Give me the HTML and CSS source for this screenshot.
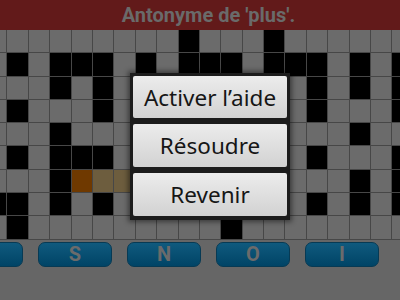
FILE: index.html
```html
<!DOCTYPE html>
<html lang="fr">
<head>
  <meta charset="UTF-8">
  <title>Mots croisés</title>
  <link rel="stylesheet" href="styles.css">
</head>
<body>

<div class="clue">Antonyme de 'plus'.</div>

<div class="board" id="board"></div>

<div class="keys">
  <div class="key"></div>
  <div class="key">S</div>
  <div class="key">N</div>
  <div class="key">O</div>
  <div class="key">I</div>
</div>

<div class="dialog">
  <button class="menu-btn">Activer l’aide</button>
  <button class="menu-btn">Résoudre</button>
  <button class="menu-btn">Revenir</button>
</div>

<script>
  // # black, o current cell, t selected word, . empty
  const rows = [
    '.........#...#......',
    '.#.###.#.###.###.#.#',
    '...#.#.........#.#.#',
    '.#...#.........#...#',
    '...#.............#..',
    '.#.###.........#...#',
    '...#ottttt.......#.#',
    '##.#.#.........#.#.#',
    '.#.........#........'
  ];
  const board = document.getElementById('board');
  rows.forEach(r => {
    for (const ch of r) {
      let d = document.createElement('div');
      d.className = 'cell';
      if (ch === '#') d.className += ' black';
      if (ch === 'o') d.className += ' cur';
      if (ch === 't') d.className += ' sel';
      board.appendChild(d);
    }
  });
</script>

</body>
</html>
```

FILE: styles.css
```css
body {
  margin: 0;
  width: 400px;
  height: 300px;
  overflow: hidden;
  background: #666;
  font-family: Roboto, "Liberation Sans", sans-serif;
  position: relative;
}

.clue {
  height: 30px;
  background: #621a1a;
  color: #6a6a6a;
  font-weight: bold;
  font-size: 20px;
  line-height: 31px;
  text-align: center;
  padding-left: 17px;
}

.board {
  display: grid;
  grid-template-columns: repeat(20, 20.4px);
  grid-auto-rows: 22.3px;
  gap: 1px;
  background: #474747;
  margin-left: -14px;
  width: 428px;
  height: 209.7px;
}
.cell { background: #6b6b6b; }
.cell.black { background: #000; }
.cell.cur { background: #6f3900; }
.cell.sel { background: #6d5d3e; }

.keys {
  display: flex;
  gap: 15px;
  margin: 2px 0 0 -51px;
}
.key {
  flex: 0 0 74px;
  height: 25px;
  box-sizing: border-box;
  border: 1px solid #073a54;
  border-radius: 7px;
  background: linear-gradient(#105a7e, #004466);
  color: #6b6b6b;
  font-weight: bold;
  font-size: 20px;
  line-height: 23px;
  text-align: center;
}

.dialog {
  position: absolute;
  left: 130px;
  top: 73px;
  width: 160px;
  box-sizing: border-box;
  padding: 3px 3px 4px;
  background: #1c1c1c;
  display: flex;
  flex-direction: column;
  gap: 6px;
  box-shadow: 0 0 5px 2px rgba(0,0,0,.45);
}
.menu-btn {
  height: 42px;
  border: none;
  border-radius: 2px;
  background: linear-gradient(#ececec, #d2d2d2);
  color: #161616;
  font-family: "Noto Sans", Roboto, sans-serif;
  font-size: 22.5px;
  padding: 0;
}
.menu-btn + .menu-btn { height: 43px; }
```
